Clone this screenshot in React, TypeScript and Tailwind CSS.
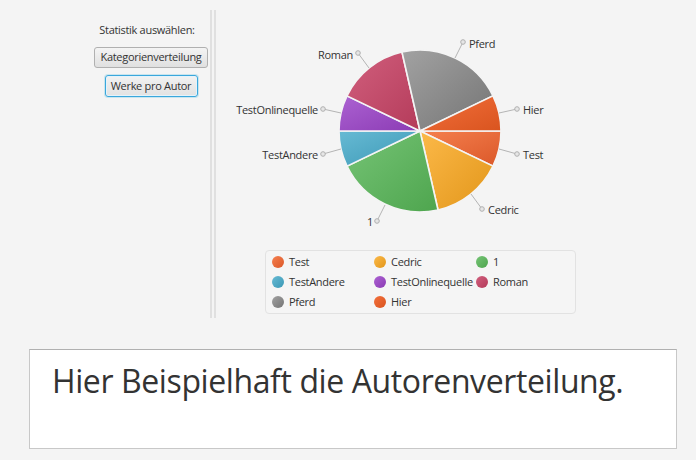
import React from "react";

type Slice = { name: string; value: number; color: string; light: string; dark: string };

const slices: Slice[] = [
  { name: "Test", value: 1, color: "#f3622d", light: "#f5804f", dark: "#db5829" },
  { name: "Cedric", value: 2, color: "#fba71b", light: "#fcb949", dark: "#e2961a" },
  { name: "1", value: 3, color: "#57b757", light: "#76c476", dark: "#4ea54e" },
  { name: "TestAndere", value: 1, color: "#41a9c9", light: "#67bad4", dark: "#3b98b5" },
  { name: "TestOnlinequelle", value: 1, color: "#9a42c8", light: "#ac62d2", dark: "#8b3bb4" },
  { name: "Roman", value: 2, color: "#c84164", light: "#d15f7d", dark: "#b43b5a" },
  { name: "Pferd", value: 3, color: "#888888", light: "#a2a2a2", dark: "#747474" },
  { name: "Hier", value: 1, color: "#f3622d", light: "#f3703c", dark: "#d9541f" },
];

// label placement measured from the chart: edge point, marker, text anchor
const labels = [
  { name: "Test", edge: [499, 149], marker: [517, 154], text: [523, 154], anchor: "start" },
  { name: "Cedric", edge: [471, 194], marker: [482, 209], text: [488, 209], anchor: "start" },
  { name: "1", edge: [385, 205], marker: [377, 221], text: [373, 221], anchor: "end" },
  { name: "TestAndere", edge: [341, 149], marker: [323, 154], text: [318, 154], anchor: "end" },
  { name: "TestOnlinequelle", edge: [341, 113], marker: [323, 109], text: [318, 109], anchor: "end" },
  { name: "Roman", edge: [369, 68], marker: [358, 53], text: [353, 54], anchor: "end" },
  { name: "Pferd", edge: [455, 58], marker: [463, 42], text: [469, 43], anchor: "start" },
  { name: "Hier", edge: [499, 113], marker: [517, 109], text: [523, 109], anchor: "start" },
];

const CX = 420;
const CY = 131;
const R = 81;

function arcPath(a0: number, a1: number) {
  const r0 = (a0 * Math.PI) / 180;
  const r1 = (a1 * Math.PI) / 180;
  const x0 = CX + R * Math.cos(r0);
  const y0 = CY + R * Math.sin(r0);
  const x1 = CX + R * Math.cos(r1);
  const y1 = CY + R * Math.sin(r1);
  const large = a1 - a0 > 180 ? 1 : 0;
  return `M${CX} ${CY} L${x0} ${y0} A${R} ${R} 0 ${large} 1 ${x1} ${y1} Z`;
}

function PieChart() {
  const total = slices.reduce((s, x) => s + x.value, 0);
  let angle = 0;
  const paths = slices.map((s, i) => {
    const a0 = angle;
    angle += (s.value / total) * 360;
    return <path key={i} d={arcPath(a0, angle)} fill={`url(#g${i})`} stroke="#f4f4f4" strokeWidth={1.6} />;
  });

  return (
    <svg width={478} height={246} viewBox="218 0 478 246" className="block">
      <defs>
        {slices.map((s, i) => (
          <linearGradient key={i} id={`g${i}`} x1="0" y1="0" x2="1" y2="1">
            <stop offset="0" stopColor={s.light} />
            <stop offset="1" stopColor={s.dark} />
          </linearGradient>
        ))}
      </defs>
      {paths}
      {labels.map((l) => (
        <g key={l.name}>
          <line x1={l.edge[0]} y1={l.edge[1]} x2={l.marker[0]} y2={l.marker[1]} stroke="#b4b4b4" strokeWidth={1} />
          <circle cx={l.marker[0]} cy={l.marker[1]} r={2.3} fill="#e6e6e6" stroke="#b0b0b0" strokeWidth={1} />
          <text
            x={l.text[0]}
            y={l.text[1]}
            textAnchor={l.anchor as "start" | "end"}
            dominantBaseline="central"
            fill="#333333"
            style={{ fontFamily: '"Open Sans", sans-serif', fontSize: 11, letterSpacing: "-0.3px" }}
          >
            {l.name}
          </text>
        </g>
      ))}
    </svg>
  );
}

function Legend() {
  return (
    <div className="ml-[47px] mt-[4px] w-[311px] h-[64px] rounded-[4px] border border-[#e2e2e2] bg-[#f5f5f5] pl-[6px] pt-[1px]">
      <div className="grid grid-cols-[102px_102px_102px] auto-rows-[20px]">
        {slices.map((s) => (
          <div key={s.name} className="flex items-center gap-[5px]">
            <span
              className="w-[12px] h-[12px] rounded-full shrink-0"
              style={{ background: `linear-gradient(135deg, ${s.light}, ${s.dark})` }}
            />
            <span className="text-[11px] tracking-[-0.3px] text-[#333]">{s.name}</span>
          </div>
        ))}
      </div>
    </div>
  );
}

export default function App() {
  return (
    <div className="w-[696px] h-[460px] bg-[#f4f4f4] overflow-hidden" style={{ fontFamily: '"Open Sans", sans-serif' }}>
      <div className="flex h-[330px]">
        {/* Left controls */}
        <div className="w-[210px] shrink-0 pl-[94px] pt-[22px]">
          <div className="w-[114px] flex flex-col items-center">
            <span className="mr-[8px] text-[11px] leading-[16px] tracking-[-0.3px] text-[#333]">Statistik auswählen:</span>
            <button className="mt-[9px] h-[21px] w-[114px] rounded-[3px] border border-[#b0b0b0] bg-gradient-to-b from-[#f4f4f4] to-[#e0e0e0] text-[11px] tracking-[-0.3px] text-[#333]">
              Kategorienverteilung
            </button>
            <button className="mt-[7px] h-[22px] w-[93px] rounded-[3px] border border-[#3aa7dc] bg-gradient-to-b from-[#f2f2f2] to-[#e2e2e2] text-[11px] tracking-[-0.3px] text-[#333] shadow-[inset_0_0_0_1px_#e4f3fb,0_0_0_1px_rgba(3,158,211,0.18)]">
              Werke pro Autor
            </button>
          </div>
        </div>

        {/* Divider */}
        <div className="mt-[10px] h-[308px] w-[6px] shrink-0 border-x-2 border-[#e0e0e0]" />

        {/* Chart */}
        <div className="flex-1 ml-[2px]">
          <PieChart />
          <Legend />
        </div>
      </div>

      {/* Text area */}
      <div className="ml-[29px] mt-[19px] w-[648px] h-[100px] bg-white border border-[#c8c8c8] border-t-[#b0b0b0] pl-[22px] pt-[11px]">
        <span className="text-[32px] leading-[40px] text-[#333] tracking-[-0.4px]">Hier Beispielhaft die Autorenverteilung.</span>
      </div>
    </div>
  );
}
